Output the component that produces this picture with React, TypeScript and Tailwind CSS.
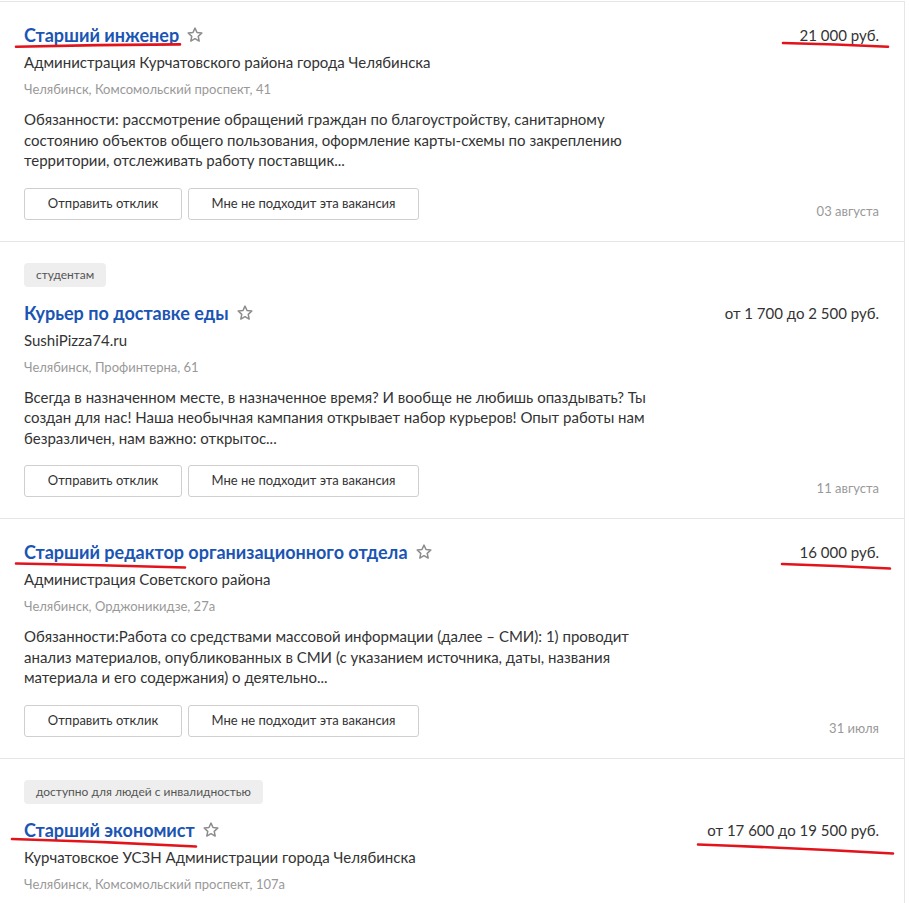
import React from "react";

type Vacancy = {
  tag?: string;
  title: string;
  salary: string;
  company: string;
  address: string;
  description?: string[];
  date?: string;
  marks?: { title: string; salary: string };
};

// red marker strokes, coordinates relative to the card
const vacancies: Vacancy[] = [
  {
    title: "Старший инженер",
    salary: "21 000 руб.",
    company: "Администрация Курчатовского района города Челябинска",
    address: "Челябинск, Комсомольский проспект, 41",
    description: [
      "Обязанности: рассмотрение обращений граждан по благоустройству, санитарному",
      "состоянию объектов общего пользования, оформление карты-схемы по закреплению",
      "территории, отслеживать работу поставщик...",
    ],
    date: "03 августа",
    marks: {
      title: "M16 44.8 Q98 42.6 180 42.4",
      salary: "M783 41 Q836 42.2 888 44.8",
    },
  },
  {
    tag: "студентам",
    title: "Курьер по доставке еды",
    salary: "от 1 700 до 2 500 руб.",
    company: "SushiPizza74.ru",
    address: "Челябинск, Профинтерна, 61",
    description: [
      "Всегда в назначенном месте, в назначенное время? И вообще не любишь опаздывать? Ты",
      "создан для нас! Наша необычная кампания открывает набор курьеров! Опыт работы нам",
      "безразличен, нам важно: открытос...",
    ],
    date: "11 августа",
  },
  {
    title: "Старший редактор организационного отдела",
    salary: "16 000 руб.",
    company: "Администрация Советского района",
    address: "Челябинск, Орджоникидзе, 27а",
    description: [
      "Обязанности:Работа со средствами массовой информации (далее – СМИ): 1) проводит",
      "анализ материалов, опубликованных в СМИ (с указанием источника, даты, названия",
      "материала и его содержания) о деятельно...",
    ],
    date: "31 июля",
    marks: {
      title: "M16 44.5 Q100 45.8 185 48.5",
      salary: "M782 45 Q836 46.5 890 49.5",
    },
  },
  {
    tag: "доступно для людей с инвалидностью",
    title: "Старший экономист",
    salary: "от 17 600 до 19 500 руб.",
    company: "Курчатовское УСЗН Администрации города Челябинска",
    address: "Челябинск, Комсомольский проспект, 107а",
    marks: {
      title: "M12 80 Q105 82.5 196 87.5",
      salary: "M698 85.5 Q795 89 893 94.5",
    },
  },
];

function Star() {
  return (
    <svg width="18" height="18" viewBox="0 0 24 24" className="shrink-0">
      <path
        d="M12 2.8l2.7 5.9 6.4.7-4.8 4.4 1.3 6.3L12 16.9l-5.6 3.2 1.3-6.3-4.8-4.4 6.4-.7z"
        fill="none"
        stroke="#8c8c8c"
        strokeWidth="2"
        strokeLinejoin="round"
      />
    </svg>
  );
}

function VacancyCard({ v }: { v: Vacancy }) {
  return (
    <div className="relative border-t border-[#e6e6e6] pl-[24px] pr-[25px] pt-[21px] pb-[21px]">
      {v.tag && (
        <div className="mb-[14px] flex">
          <span className="h-[24px] rounded-[4px] bg-[#eeeeee] px-[12px] text-[12px] leading-[24px] text-[#555]">
            {v.tag}
          </span>
        </div>
      )}
      <div className="flex items-center justify-between">
        <div className="flex items-center gap-[7px]">
          <span className="text-[18px] font-bold leading-[24px] text-[#1b55b3]">{v.title}</span>
          <Star />
        </div>
        <span className="text-[15px] leading-[24px] text-[#333]">{v.salary}</span>
      </div>
      <div className="mt-[5px] text-[15px] leading-[20px] text-[#333]">{v.company}</div>
      <div className="mt-[8px] text-[13px] leading-[18px] text-[#999]">{v.address}</div>
      {v.description && (
        <div className="mt-[11px] text-[15px] leading-[20.5px] text-[#333]">
          {v.description.map((line) => (
            <div key={line} className="whitespace-nowrap">
              {line}
            </div>
          ))}
        </div>
      )}
      {v.date && (
        <div className="mt-[17px] flex items-end justify-between">
          <div className="flex gap-[6px]">
            <button className="h-[32px] w-[158px] rounded-[3px] border border-[#cfcfcf] bg-white text-[13px] text-[#333]">
              Отправить отклик
            </button>
            <button className="h-[32px] w-[231px] rounded-[3px] border border-[#cfcfcf] bg-white text-[13px] text-[#333]">
              Мне не подходит эта вакансия
            </button>
          </div>
          <span className="text-[13px] leading-[18px] text-[#999]">{v.date}</span>
        </div>
      )}
      {v.marks && (
        <svg className="pointer-events-none absolute left-0 top-0 overflow-visible" width="909" height="100">
          <path d={v.marks.title} stroke="#e3131b" strokeWidth="2.6" fill="none" strokeLinecap="round" />
          <path d={v.marks.salary} stroke="#e3131b" strokeWidth="2.6" fill="none" strokeLinecap="round" />
        </svg>
      )}
    </div>
  );
}

export default function App() {
  return (
    <div className="min-h-screen bg-white pt-px" style={{ fontFamily: "Lato, 'Open Sans', sans-serif" }}>
      <div className="w-[905px] border-r border-[#e6e6e6]">
        {vacancies.map((v) => (
          <VacancyCard key={v.title} v={v} />
        ))}
      </div>
    </div>
  );
}
